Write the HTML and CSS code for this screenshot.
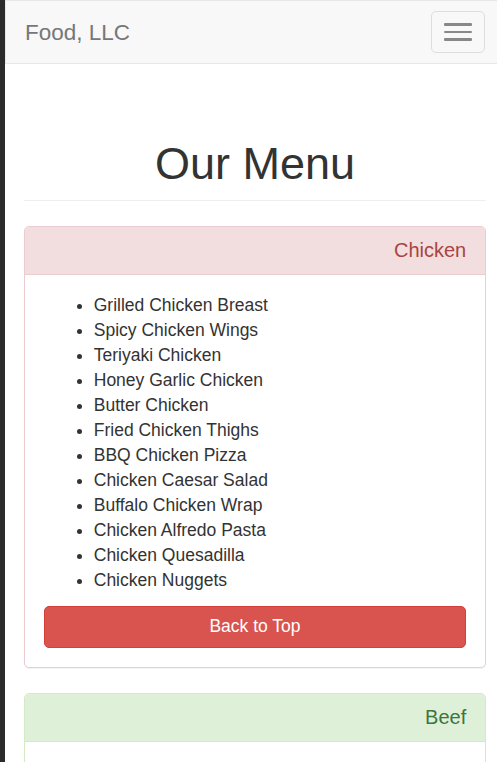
FILE: index.html
```html
<!DOCTYPE html>
<html lang="en">
<head>
<meta charset="utf-8">
<title>Food, LLC</title>
<link rel="stylesheet" href="styles.css">
</head>
<body>
<div class="edge"></div>
<div class="page">
  <nav class="navbar">
    <a class="brand" href="#">Food, LLC</a>
    <button class="toggle" type="button" aria-label="Toggle navigation">
      <span class="bar"></span>
      <span class="bar"></span>
      <span class="bar"></span>
    </button>
  </nav>
  <main class="container">
    <div class="page-header">
      <h1>Our Menu</h1>
    </div>
    <section class="panel panel-danger">
      <div class="panel-heading"><h3 class="panel-title">Chicken</h3></div>
      <div class="panel-body">
        <ul class="menu-list">
          <li>Grilled Chicken Breast</li>
          <li>Spicy Chicken Wings</li>
          <li>Teriyaki Chicken</li>
          <li>Honey Garlic Chicken</li>
          <li>Butter Chicken</li>
          <li>Fried Chicken Thighs</li>
          <li>BBQ Chicken Pizza</li>
          <li>Chicken Caesar Salad</li>
          <li>Buffalo Chicken Wrap</li>
          <li>Chicken Alfredo Pasta</li>
          <li>Chicken Quesadilla</li>
          <li>Chicken Nuggets</li>
        </ul>
        <a class="btn btn-danger" href="#">Back to Top</a>
      </div>
    </section>
    <section class="panel panel-success">
      <div class="panel-heading"><h3 class="panel-title">Beef</h3></div>
      <div class="panel-body"></div>
    </section>
  </main>
</div>
</body>
</html>
```

FILE: styles.css
```css
* { box-sizing: border-box; }
html, body { height: 100%; }
body {
  margin: 0;
  display: flex;
  overflow: hidden;
  font-family: "Liberation Sans", Arial, Helvetica, sans-serif;
  font-size: 17.5px;
  line-height: 25px;
  color: #333;
  background: #fff;
}
.edge {
  width: 5px;
  flex: 0 0 5px;
  background: #2b2b2b;
}
.page {
  flex: 1;
  min-width: 0;
}
.navbar {
  height: 64px;
  display: flex;
  align-items: flex-start;
  justify-content: space-between;
  background: #f8f8f8;
  border: 1px solid #e7e7e7;
  border-right: none;
  margin-bottom: 25px;
}
.brand {
  padding: 18.75px 19px;
  font-size: 22.5px;
  line-height: 25px;
  color: #777;
  text-decoration: none;
}
.toggle {
  margin: 10px 12px 0 0;
  width: 54px;
  height: 42px;
  padding: 0;
  display: flex;
  flex-direction: column;
  align-items: center;
  justify-content: center;
  gap: 5px;
  background: transparent;
  border: 1px solid #ddd;
  border-radius: 5px;
}
.bar {
  display: block;
  width: 28px;
  height: 2.5px;
  background: #888;
  border-radius: 1px;
}
.container {
  display: flow-root;
  padding: 0 11px 0 19px;
}
.page-header {
  margin: 50px 0 25px;
  padding-bottom: 11px;
  border-bottom: 1px solid #eee;
}
h1 {
  margin: 0;
  text-align: center;
  font-size: 45px;
  line-height: 49.5px;
  font-weight: 500;
  color: #333;
}
.panel {
  margin-bottom: 25px;
  background: #fff;
  border: 1px solid transparent;
  border-radius: 5px;
  box-shadow: 0 1px 1px rgba(0, 0, 0, 0.05);
}
.panel-heading {
  padding: 12.5px 18.75px;
  border-bottom: 1px solid transparent;
  border-radius: 4px 4px 0 0;
  text-align: right;
}
.panel-title {
  margin: 0;
  font-size: 20px;
  line-height: 22px;
  font-weight: 500;
}
.panel-body {
  padding: 18.75px;
  min-height: 60px;
}
.panel-danger { border-color: #ebccd1; }
.panel-danger .panel-heading {
  background: #f2dede;
  border-color: #ebccd1;
  color: #a94442;
}
.panel-success { border-color: #d6e9c6; }
.panel-success .panel-heading {
  background: #dff0d8;
  border-color: #d6e9c6;
  color: #3c763d;
}
.menu-list {
  margin: 0 0 12.5px;
  padding-left: 50px;
}
.btn {
  display: block;
  width: 100%;
  padding: 7.5px 15px;
  font-size: 17.5px;
  line-height: 25px;
  text-align: center;
  text-decoration: none;
  border: 1px solid transparent;
  border-radius: 5px;
}
.btn-danger {
  color: #fff;
  background: #d9534f;
  border-color: #d43f3a;
}
```
